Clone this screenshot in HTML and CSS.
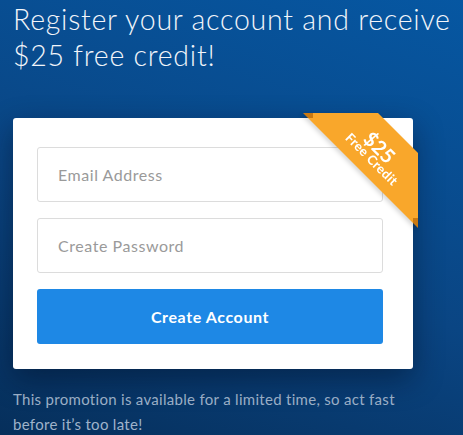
FILE: index.html
```html
<!DOCTYPE html>
<html>
<head>
<meta charset="utf-8">
<link rel="stylesheet" href="styles.css">
</head>
<body>
<main class="promo">
  <h1 class="title">Register your account and receive $25 free credit!</h1>
  <div class="card">
    <svg class="ribbon" width="115" height="115" viewBox="0 0 115 115">
      <polygon points="0,0 10,0 10,5 5,5" fill="#c97912"/>
      <polygon points="110,105 115,105 115,115 110,110" fill="#c97912"/>
      <polygon points="10,0 75,0 115,40 115,105 110,105 110,110 5,5 10,5" fill="#f9a72b"/>
      <text class="rb-big" transform="translate(77,34) rotate(45)" text-anchor="middle" dominant-baseline="central">$25</text>
      <text class="rb-small" transform="translate(69,46) rotate(45)" text-anchor="middle" dominant-baseline="central">Free Credit</text>
    </svg>
    <form class="form">
      <input class="field" type="email" placeholder="Email Address">
      <input class="field" type="password" placeholder="Create Password">
      <button class="btn" type="button">Create Account</button>
    </form>
  </div>
  <p class="note">This promotion is available for a limited time, so act fast before it’s too late!</p>
</main>
</body>
</html>
```

FILE: styles.css
```css
html, body {
  margin: 0;
  height: 100%;
}
body {
  background: linear-gradient(20deg, #062f5b 0%, #0a4583 45%, #0657a2 100%);
  font-family: Lato, "Open Sans", sans-serif;
  overflow: hidden;
}
.promo {
  padding: 1px 0 0 13px;
}
.title {
  margin: 0;
  color: #f2f5fa;
  font-weight: 300;
  font-size: 28.5px;
  line-height: 36px;
  letter-spacing: 0.75px;
}
.card {
  position: relative;
  margin-top: 45px;
  width: 400px;
  box-sizing: border-box;
  padding: 29px 30px 25px 24px;
  background: #fff;
  border-radius: 3px;
  box-shadow: 0 10px 30px rgba(0, 10, 30, 0.45);
}
.ribbon {
  position: absolute;
  top: -5px;
  right: -5px;
  filter: drop-shadow(-2px 2px 2px rgba(0, 0, 0, 0.15));
}
.rb-big {
  fill: #fff;
  font-family: Lato, sans-serif;
  font-weight: 700;
  font-size: 20px;
}
.rb-small {
  fill: #fff;
  font-family: Lato, sans-serif;
  font-weight: 700;
  font-size: 13px;
  letter-spacing: 0.3px;
}
.form {
  display: flex;
  flex-direction: column;
  gap: 16px;
}
.field {
  height: 55px;
  box-sizing: border-box;
  border: 1px solid #dcdcdc;
  border-radius: 3px;
  padding: 0 20px;
  font-family: Lato, sans-serif;
  font-size: 16px;
  letter-spacing: 0.55px;
  color: #555;
  outline: none;
}
.field::placeholder {
  color: #9a9a9a;
}
.btn {
  height: 55px;
  border: 0;
  border-radius: 3px;
  background: #1e88e5;
  color: #fff;
  font-family: Lato, sans-serif;
  font-weight: 700;
  font-size: 16px;
  letter-spacing: 0.6px;
}
.note {
  margin: 18px 0 0;
  color: #9fb3cb;
  font-size: 15px;
  line-height: 25px;
  letter-spacing: 0.3px;
  width: 400px;
}
```
